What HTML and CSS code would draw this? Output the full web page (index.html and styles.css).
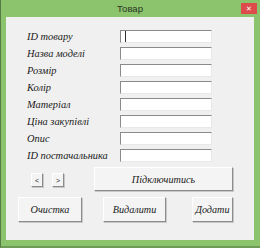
FILE: index.html
```html
<!DOCTYPE html>
<html>
<head>
    <title>Товар</title>
    <link rel="stylesheet" href="styles.css">
</head>
<body>
    <div class="window">
        <div class="titlebar">
            <span class="title">Товар</span>
            <span class="close">✕</span>
        </div>
        <div class="client">
            <div class="fields">
                <label>ID товару</label>
                <input type="text" class="active">
                <label>Назва моделі</label>
                <input type="text">
                <label>Розмір</label>
                <input type="text">
                <label>Колір</label>
                <input type="text">
                <label>Матеріал</label>
                <input type="text">
                <label>Ціна закупівлі</label>
                <input type="text">
                <label>Опис</label>
                <input type="text">
                <label>ID постачальника</label>
                <input type="text">
            </div>

            <div class="nav-row">
                <button class="small prev">&lt;</button>
                <button class="small next">&gt;</button>
                <button class="connect">Підключитись</button>
            </div>

            <div class="action-row">
                <button class="clear">Очистка</button>
                <button class="delete">Видалити</button>
                <button class="add">Додати</button>
            </div>
        </div>
    </div>
</body>
</html>
```

FILE: styles.css
```css
* {
    box-sizing: border-box;
}

body {
    margin: 0;
    background: #2f4a28;
}

.window {
    width: 260px;
    height: 248px;
    background: #8cc36d;
    border-left: 1px solid #557a44;
    border-bottom: 2px solid #6d9a57;
    padding: 0 6px 0 5px;
}

.titlebar {
    height: 17px;
    display: flex;
    align-items: center;
    justify-content: center;
    position: relative;
}

.title {
    font-family: 'Liberation Sans', sans-serif;
    font-size: 9.5px;
    color: #2a3524;
}

.close {
    position: absolute;
    right: -3px;
    top: 3px;
    width: 16px;
    height: 11px;
    background: #dd4b4b;
    color: #fff;
    font-family: 'DejaVu Sans', sans-serif;
    font-size: 7px;
    font-weight: bold;
    display: flex;
    align-items: center;
    justify-content: center;
}

.client {
    height: 223px;
    background: #f0f0f0;
    padding: 13px 0 0 0;
}

.fields {
    display: grid;
    grid-template-columns: 93px 92px;
    grid-auto-rows: 13px;
    row-gap: 4px;
    padding-left: 21px;
    align-items: center;
}

label {
    font-family: 'Liberation Serif', serif;
    font-style: italic;
    font-size: 10.4px;
    color: #1a1a1a;
    white-space: nowrap;
}

input {
    height: 13px;
    width: 92px;
    margin: 0;
    padding: 0 4px;
    background: #fff;
    border: 1px solid;
    border-color: #8a8a8a #e8e8e8 #e8e8e8 #8a8a8a;
    outline: none;
    font-size: 9px;
}

input.active {
    box-shadow: inset 4px 0 0 #fff, inset 5px 0 0 #333;
}

button {
    margin: 0;
    padding: 0;
    background: #f4f4f4;
    border: 1px solid;
    border-color: #ffffff #8c8c8c #8c8c8c #ffffff;
    box-shadow: 1px 1px 0 #c8c8c8;
    font-family: 'Liberation Serif', serif;
    font-style: italic;
    font-size: 10.2px;
    color: #1a1a1a;
}

.nav-row {
    display: flex;
    align-items: flex-start;
    margin-top: 5px;
    height: 24px;
}

.small {
    width: 12px;
    height: 14px;
    margin-top: 6px;
    font-family: 'Liberation Sans', sans-serif;
    font-style: normal;
    font-size: 7px;
}

.prev {
    margin-left: 25px;
}

.next {
    margin-left: 9px;
}

.connect {
    width: 139px;
    height: 24px;
    margin-left: 30px;
}

.action-row {
    display: flex;
    margin-top: 6px;
}

.action-row button {
    height: 25px;
}

.clear {
    width: 64px;
    margin-left: 12px;
}

.delete {
    width: 63px;
    margin-left: 21px;
}

.add {
    width: 41px;
    margin-left: 26px;
}
```
